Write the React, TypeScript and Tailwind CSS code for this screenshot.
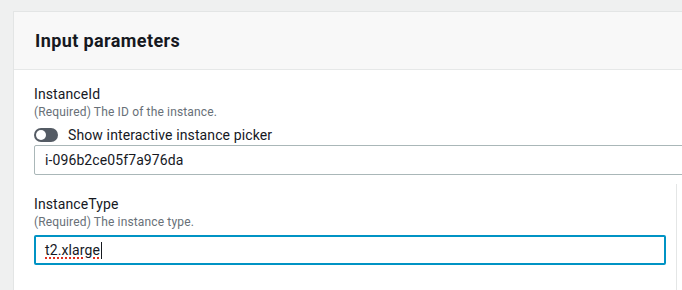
import React from "react";

function Toggle() {
  return (
    <span className="relative inline-block h-[14px] w-[24px] shrink-0 rounded-full bg-[#545b64]">
      <span className="absolute left-[2px] top-[2px] h-[10px] w-[10px] rounded-full bg-white" />
    </span>
  );
}

export default function App() {
  return (
    <div className="h-[290px] w-[682px] overflow-hidden bg-[#eff0f0] pl-[13px] pt-[11px] font-['Roboto',sans-serif] text-[#16191f]">
      <div className="w-[900px] border-l border-t border-[#e3e5e5] bg-white">
        <div className="flex h-[58px] items-center border-b border-[#e6e8e8] bg-[#f8f8f8] pl-[21px]">
          <h2 className="text-[18px] font-bold leading-[22px] tracking-[0.4px]">Input parameters</h2>
        </div>

        <div className="pl-[20px] pt-[14px]">
          <div className="w-[800px]">
            <div className="text-[14px] leading-[20px] tracking-[0.1px]">InstanceId</div>
            <div className="text-[12px] leading-[16px] tracking-[0.15px] text-[#687078]">
              (Required) The ID of the instance.
            </div>
            <div className="mt-[5px] flex h-[20px] items-center gap-[10px]">
              <Toggle />
              <span className="text-[14px] leading-[20px] tracking-[0.12px]">Show interactive instance picker</span>
            </div>
            <div className="flex h-[30px] items-center rounded-[2px] border border-[#aab7b8] px-[10px] text-[14px] tracking-[0.1px]">
              i-096b2ce05f7a976da
            </div>
          </div>

          <div className="mt-[9px] w-[643px] border-r border-[#e4e6e6] pr-[10px] pt-[10px] pb-[40px]">
            <div className="text-[14px] leading-[20px] tracking-[0.1px]">InstanceType</div>
            <div className="text-[12px] leading-[16px] tracking-[0.15px] text-[#687078]">
              (Required) The instance type.
            </div>
            <div className="mt-[5px] flex h-[30px] items-center rounded-[2px] border-2 border-[#0093c4] px-[9px] text-[14px] tracking-[0.1px]">
              <span className="underline decoration-[#e0301e] decoration-dotted decoration-[1.5px] underline-offset-[3px]">
                t2.xlarge
              </span>
              <span className="ml-[1px] inline-block h-[17px] w-px bg-[#16191f]" />
            </div>
          </div>
        </div>
      </div>
    </div>
  );
}
